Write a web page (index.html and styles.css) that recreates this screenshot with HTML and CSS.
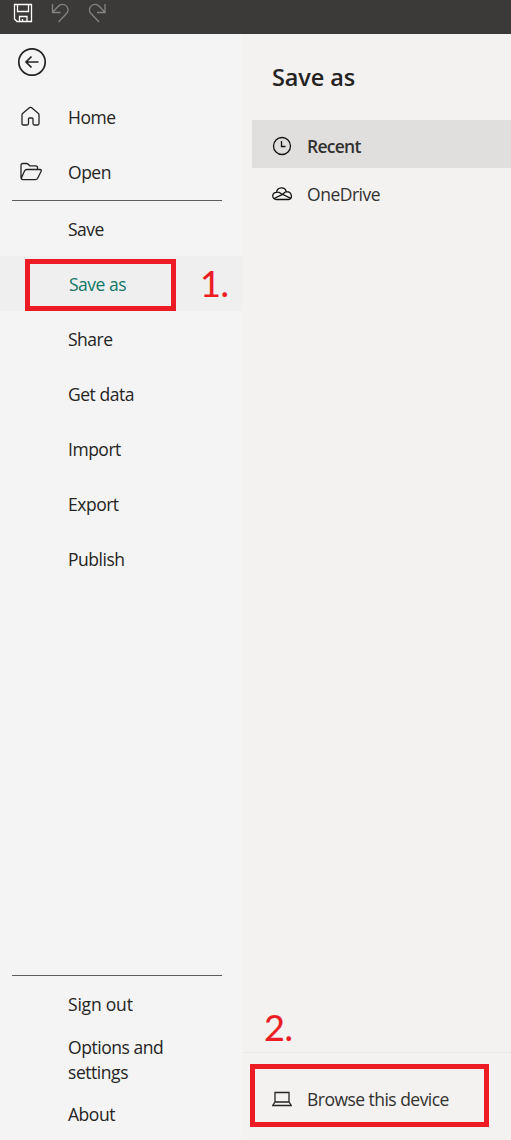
FILE: index.html
```html
<!DOCTYPE html>
<html lang="en">
<head>
<meta charset="utf-8">
<title>Save as</title>
<link rel="stylesheet" href="styles.css">
</head>
<body>
<div class="app">
  <header class="titlebar">
    <svg class="tool" width="20" height="20" viewBox="0 0 20 20"><path d="M1.500 1.500h17v17H4l-2.500-2.500zM4.500 1.500v7h11v-7M6.500 18.500v-5h7.500v5M9.500 16v2.500"/></svg>
    <svg class="tool dim" width="20" height="20" viewBox="0 0 20 20"><path d="M2.500 1v8.500H10.500M2.500 9.500L8 3.500c5.500-5.500 13.500 1.500 8.500 7L8.500 19"/></svg>
    <svg class="tool dim" width="20" height="20" viewBox="0 0 20 20"><path d="M18 1v8.500H10M18 9.500L12.500 3.500c-5.500-5.500-13.500 1.500-8.500 7L12 19"/></svg>
  </header>
  <div class="body">
    <nav class="sidebar">
      <div class="back">
        <svg width="28" height="28" viewBox="0 0 28 28"><circle cx="14" cy="14" r="13.200"/><path d="M20.500 14H8M13.500 8.500L8 14l5.500 5.500"/></svg>
      </div>
      <a class="item"><svg class="icon" width="22" height="22" viewBox="0 0 22 22"><path d="M2 8.700Q2 8 2.600 7.500L9.600 1.600Q10.500 1 11.400 1.600L18.400 7.500Q19 8 19 8.700V17.500Q19 19 17.500 19H14.500Q13 19 13 17.500V13Q13 12 12 12H9.500Q8.500 12 8.500 13V17.500Q8.500 19 7 19H3.500Q2 19 2 17.500Z"/></svg><span>Home</span></a>
      <a class="item"><svg class="icon" width="22" height="22" viewBox="0 0 22 22"><path d="M2 18.500Q1 18 1 16.500V4.500Q1 2.500 3 2.500H6.500Q7.500 2.500 8.200 3.200L9.800 4.800H15.500Q17.500 4.800 17.500 6.500V8.500M2 18.500Q1.200 17.500 1.800 16L4.400 10.200Q5.200 8.500 7 8.500H20Q22 8.500 21 10.500L17.800 17Q17 18.700 15.500 18.700H3Q2.300 18.700 2 18.500"/></svg><span>Open</span></a>
      <hr class="rule">
      <a class="item">Save</a>
      <a class="item selected">Save as</a>
      <a class="item">Share</a>
      <a class="item">Get data</a>
      <a class="item">Import</a>
      <a class="item">Export</a>
      <a class="item">Publish</a>
      <div class="bottom">
        <hr class="rule">
        <a class="link">Sign out</a>
        <a class="link">Options and<br>settings</a>
        <a class="link">About</a>
      </div>
    </nav>
    <main class="panel">
      <h1>Save as</h1>
      <div class="place current"><svg width="20" height="20" viewBox="0 0 20 20"><circle cx="10" cy="10" r="8.500"/><path d="M9.500 5v5.500h4"/></svg><span>Recent</span></div>
      <div class="place"><svg width="20" height="20" viewBox="0 0 20 20"><path d="M4.500 15.500C-.5 15.500-.5 8.500 4.500 8.300C5.500 2.700 13 2.500 14.200 7.600C20.500 7.500 21 15.500 16.500 15.500ZM4.500 8.300C6 8 7.500 8.500 9 9.500L18.700 14.300M2 14.500L11 10.200Q12.500 8.200 14.500 7.700"/></svg><span>OneDrive</span></div>
      <footer class="browse"><svg width="20" height="20" viewBox="0 0 20 20"><path d="M3 12V2.500H17V12M3 12H17L19.300 15.500H.7Z"/></svg><span>Browse this device</span></footer>
    </main>
  </div>
  <div class="mark mark-one"></div>
  <div class="mark mark-two"></div>
  <div class="step step-one">1.</div>
  <div class="step step-two">2.</div>
</div>
</body>
</html>
```
FILE: styles.css
```css
* { box-sizing: border-box; }
body { margin: 0; }
.app {
  position: relative;
  display: flex;
  flex-direction: column;
  width: 511px;
  height: 1140px;
  overflow: hidden;
  font: 400 17.500px/25px "Open Sans", "Noto Sans", sans-serif;
  letter-spacing: -0.48px;
  color: #252423;
}
svg { flex: none; fill: none; stroke: #252423; stroke-width: 1.300; }
.titlebar { display: flex; gap: 17px; height: 34px; padding: 3px 13px; background: #3b3a38; }
.titlebar .tool { stroke: #fff; stroke-width: 1.300; }
.titlebar .dim { stroke: #858482; }
.body { display: flex; flex: 1; }
.sidebar { display: flex; flex-direction: column; width: 242px; background: #f4f4f4; }
.back { height: 56px; padding: 14px 18px; }
.back svg { display: block; stroke-width: 1.700; }
.item { display: flex; align-items: center; height: 55px; padding-left: 68px; }
.item .icon { margin: -2px 26px 0 -48px; }
.rule { flex: none; width: 210px; height: 1px; margin: 0 0 0 12px; border: 0; background: #605e5c; }
.rule ~ .item { padding-top: 2px; }
.rule ~ .selected { background: #efefef; color: #117865; padding-left: 69px; }
.bottom { display: flex; flex-direction: column; height: 165px; margin-top: auto; }
.link { margin: 0 0 18px 68px; letter-spacing: -0.45px; }
.rule + .link { margin-top: 16px; letter-spacing: -0.2px; }
.link:last-child { margin-top: -1px; }
.panel { display: flex; flex: 1; flex-direction: column; padding-left: 10px; background: #f3f2f1; }
h1 { height: 86px; margin: 0; padding: 27px 20px 0; font-size: 23.500px; font-weight: 600; line-height: 32px; letter-spacing: -0.1px; }
.place { display: flex; align-items: center; gap: 15px; height: 48px; padding: 5px 20px 0; color: #323130; }
.place svg { margin-top: -1px; stroke: #111; }
.current { background: #e1dfdd; font-weight: 600; letter-spacing: -0.75px; }
.browse { display: flex; align-items: center; gap: 15px; height: 88px; margin: auto 0 0 -10px; padding: 6px 30px 0; border-top: 1px solid #eae9e8; color: #323130; letter-spacing: -0.53px; }
.mark { position: absolute; border: 5px solid #ed1c24; }
.mark-one { left: 25px; top: 259px; width: 151px; height: 52px; }
.mark-two { left: 250px; top: 1064px; width: 239px; height: 63px; }
.step { position: absolute; font: 400 36px/40px Lato, sans-serif; letter-spacing: -0.5px; color: #ed1c24; -webkit-text-stroke: 0.2px #ed1c24; }
.step-one { left: 200px; top: 263px; }
.step-two { left: 264px; top: 1007px; }
```
